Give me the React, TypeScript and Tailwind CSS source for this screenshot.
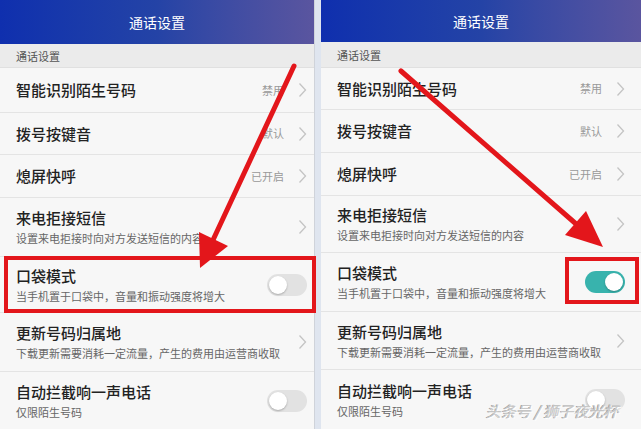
const FONT = { fontFamily: '"Noto Sans CJK SC", "Noto Sans", sans-serif' };

type Row = {
  title: string;
  sub?: string;
  value?: string;
  kind: "chevron" | "toggleOff" | "toggleOn";
  h: string;
};

function Chevron() {
  return (
    <svg width="9" height="16" viewBox="0 0 9 16" className="shrink-0">
      <path d="M1.5 1.5 L7.5 8 L1.5 14.5" fill="none" stroke="#c4c4c4" strokeWidth="1.3" />
    </svg>
  );
}

function Toggle({ on }: { on: boolean }) {
  return (
    <div
      className={`relative w-[40px] h-[22px] rounded-full shrink-0 ${
        on ? "bg-[#38b3ad]" : "bg-[#e2e2e2]"
      }`}
    >
      <div
        className={`absolute top-[2px] w-[18px] h-[18px] rounded-full bg-white shadow-[0_1px_2px_rgba(0,0,0,0.25)] ${
          on ? "right-[2px]" : "left-[2px]"
        }`}
      />
    </div>
  );
}

function Panel({
  headerH,
  sectionH,
  rows,
  padR,
}: {
  headerH: string;
  sectionH: string;
  rows: Row[];
  padR: string;
}) {
  return (
    <div className="flex flex-col h-full bg-[#f7f7f7]">
      <div
        className={`${headerH} shrink-0 flex items-center justify-center bg-gradient-to-r from-[#0f2fae] via-[#2443a6] to-[#5a559f] text-white text-[14px]`}
      >
        通话设置
      </div>
      <div
        className={`${sectionH} shrink-0 flex items-center pl-[16px] pt-[2px] bg-[#ebebeb] text-[11px] text-[#555] border-b border-[#e0e0e0]`}
      >
        通话设置
      </div>
      {rows.map((r) => (
        <div
          key={r.title}
          className={`${r.h} shrink-0 flex items-center pl-[16px] ${padR} border-b border-[#e4e4e4]`}
        >
          <div className="flex-1 flex flex-col justify-center">
            <div className="text-[15px] leading-[20px] text-[#222] font-medium">{r.title}</div>
            {r.sub && (
              <div className="text-[11px] leading-[16px] mt-[2px] text-[#666]">{r.sub}</div>
            )}
          </div>
          {r.value && <div className="text-[11px] text-[#999] mr-[14px]">{r.value}</div>}
          {r.kind === "chevron" && <Chevron />}
          {r.kind === "toggleOff" && <Toggle on={false} />}
          {r.kind === "toggleOn" && <Toggle on={true} />}
        </div>
      ))}
    </div>
  );
}

export default function App() {
  const leftRows: Row[] = [
    { title: "智能识别陌生号码", value: "禁用", kind: "chevron", h: "h-[45px]" },
    { title: "拨号按键音", value: "默认", kind: "chevron", h: "h-[42px]" },
    { title: "熄屏快呼", value: "已开启", kind: "chevron", h: "h-[43px]" },
    { title: "来电拒接短信", sub: "设置来电拒接时向对方发送短信的内容", kind: "chevron", h: "h-[59px]" },
    { title: "口袋模式", sub: "当手机置于口袋中，音量和振动强度将增大", kind: "toggleOff", h: "h-[56px]" },
    { title: "更新号码归属地", sub: "下载更新需要消耗一定流量，产生的费用由运营商收取", kind: "chevron", h: "h-[59px]" },
    { title: "自动拦截响一声电话", sub: "仅限陌生号码", kind: "toggleOff", h: "h-[58px]" },
  ];
  const rightRows: Row[] = [
    { title: "智能识别陌生号码", value: "禁用", kind: "chevron", h: "h-[42px]" },
    { title: "拨号按键音", value: "默认", kind: "chevron", h: "h-[43px]" },
    { title: "熄屏快呼", value: "已开启", kind: "chevron", h: "h-[43px]" },
    { title: "来电拒接短信", sub: "设置来电拒接时向对方发送短信的内容", kind: "chevron", h: "h-[57px]" },
    { title: "口袋模式", sub: "当手机置于口袋中，音量和振动强度将增大", kind: "toggleOn", h: "h-[59px]" },
    { title: "更新号码归属地", sub: "下载更新需要消耗一定流量，产生的费用由运营商收取", kind: "chevron", h: "h-[58px]" },
    { title: "自动拦截响一声电话", sub: "仅限陌生号码", kind: "toggleOff", h: "h-[60px]" },
  ];

  return (
    <div className="relative w-[641px] h-[429px] overflow-hidden bg-white" style={FONT}>
      <div className="flex h-full">
        <div className="w-[315px] h-full border-r border-[#cfd3da]">
          <Panel headerH="h-[44px]" sectionH="h-[24px]" rows={leftRows} padR="pr-[7px]" />
        </div>
        <div className="w-[6px] h-full bg-[#dfe5ef]" />
        <div className="flex-1 h-full">
          <Panel headerH="h-[42px]" sectionH="h-[26px]" rows={rightRows} padR="pr-[16px]" />
        </div>
      </div>

      {/* Annotation overlay */}
      <svg className="absolute inset-0 pointer-events-none" width="641" height="429" viewBox="0 0 641 429">
        <rect x="6" y="258" width="308" height="53" fill="none" stroke="#e3161b" strokeWidth="4" />
        <rect x="567" y="259" width="70" height="43" fill="none" stroke="#e3161b" strokeWidth="4" />
        <line x1="294" y1="66" x2="213" y2="240" stroke="#e3161b" strokeWidth="5" strokeLinecap="round" />
        <polygon points="228,246 199,232 200,268" fill="#e3161b" />
        <line x1="401" y1="71" x2="575" y2="223" stroke="#e3161b" strokeWidth="5" strokeLinecap="round" />
        <polygon points="565,235 586,211 603,247" fill="#e3161b" />
      </svg>

      {/* Watermark */}
      <div
        className="absolute left-[486px] top-[401px] whitespace-nowrap text-[15px] leading-[20px] italic text-[#c8c8c8]"
        style={{ textShadow: "1px 1px 0 #ffffff, -1px 0 0 #9a9a9a" }}
      >
        头条号 / 狮子夜光杯
      </div>
    </div>
  );
}
